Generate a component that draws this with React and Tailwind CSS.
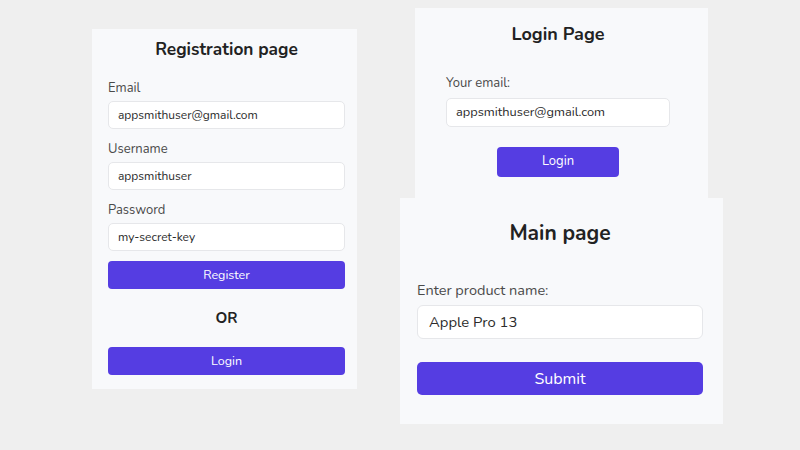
import React from "react";

const font = { fontFamily: "Nunito, Lato, 'Noto Sans', sans-serif" };

function Field({ label, value }) {
  return (
    <div className="flex flex-col">
      <div className="text-[13px] leading-[18px] text-[#4a4a4a]">{label}</div>
      <div className="mt-[4px] h-[28px] rounded-[5px] border border-[#e6e7ea] bg-white px-[9px] flex items-center text-[12px] text-[#2b2b2b]">
        {value}
      </div>
    </div>
  );
}

export default function App() {
  return (
    <div className="relative w-[800px] h-[450px] bg-[#efefef] overflow-hidden" style={font}>
      {/* Registration card */}
      <div className="absolute left-[92px] top-[29px] w-[265px] h-[360px] bg-[#f8f9fb] pl-[16px] pr-[12px] pt-[9px] flex flex-col">
        <div className="text-center text-[17.3px] leading-[24px] font-bold text-[#222]">Registration page</div>
        <div className="mt-[17px] flex flex-col gap-[11px]">
          <Field label="Email" value="appsmithuser@gmail.com" />
          <Field label="Username" value="appsmithuser" />
          <Field label="Password" value="my-secret-key" />
        </div>
        <button className="mt-[10px] h-[28px] rounded-[4px] bg-[#553de2] text-white text-[12.5px]">Register</button>
        <div className="mt-[19px] text-center text-[15px] leading-[20px] font-bold text-[#222]">OR</div>
        <button className="mt-[19px] h-[28px] rounded-[4px] bg-[#553de2] text-white text-[12.5px]">Login</button>
      </div>

      {/* Login card */}
      <div className="absolute left-[415px] top-[8px] w-[293px] h-[200px] bg-[#f8f9fb] pt-[14px]">
        <div className="ml-[31px] w-[224px] flex flex-col">
          <div className="text-center text-[18px] leading-[24px] font-bold text-[#222]">Login Page</div>
          <div className="mt-[27px] text-[13px] leading-[20px] text-[#4a4a4a]">Your email:</div>
          <div className="mt-[5px] h-[29px] rounded-[5px] border border-[#e6e7ea] bg-white px-[9px] flex items-center text-[12.8px] text-[#2b2b2b]">
            appsmithuser@gmail.com
          </div>
          <button className="mt-[20px] self-center w-[122px] h-[30px] rounded-[4px] bg-[#553de2] text-white text-[13px]">Login</button>
        </div>
      </div>

      {/* Main card */}
      <div className="absolute left-[400px] top-[198px] w-[323px] h-[226px] bg-[#f8f9fb] pl-[17px] pr-[20px] pt-[21px] flex flex-col">
        <div className="text-center text-[21px] leading-[28px] font-bold text-[#222]">Main page</div>
        <div className="mt-[32px] text-[14.5px] leading-[22px] text-[#4a4a4a]">Enter product name:</div>
        <div className="mt-[4px] h-[34px] rounded-[6px] border border-[#e6e7ea] bg-white px-[11px] flex items-center text-[14.8px] text-[#2b2b2b]">
          Apple Pro 13
        </div>
        <button className="mt-[23px] h-[33px] rounded-[5px] bg-[#553de2] text-white text-[16px]">Submit</button>
      </div>
    </div>
  );
}
